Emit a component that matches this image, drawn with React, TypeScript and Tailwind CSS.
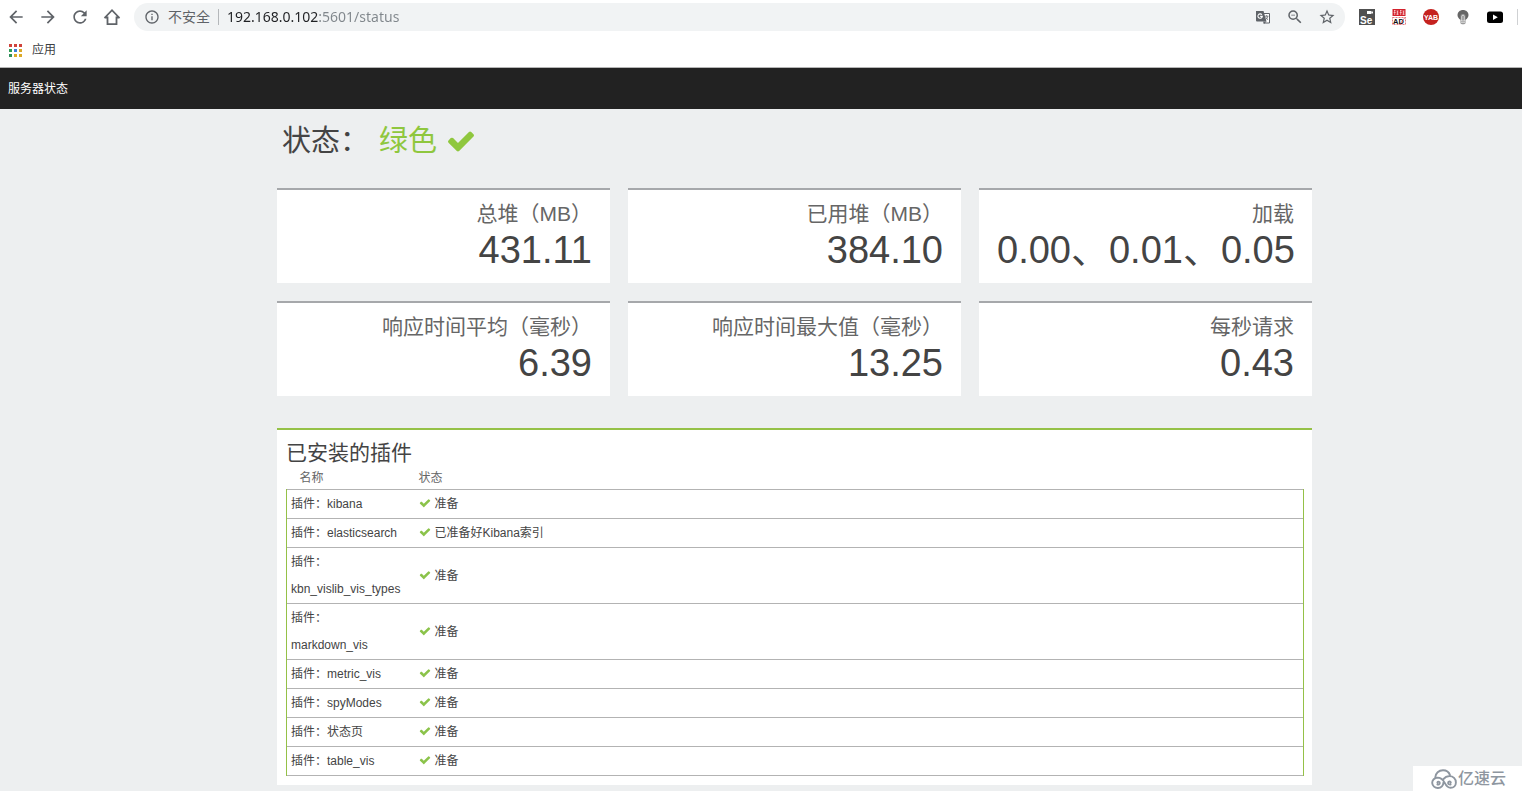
import type { ReactNode } from "react";
import {
  MdArrowBack,
  MdArrowForward,
  MdInfoOutline,
  MdRefresh,
  MdStarBorder,
  MdZoomOut,
} from "react-icons/md";

const metrics = [
  { label: "总堆（MB）", value: "431.11" },
  { label: "已用堆（MB）", value: "384.10" },
  { label: "加载", value: "0.00、0.01、0.05" },
  { label: "响应时间平均（毫秒）", value: "6.39" },
  { label: "响应时间最大值（毫秒）", value: "13.25" },
  { label: "每秒请求", value: "0.43" },
];

const plugins = [
  { name: "kibana", status: "准备" },
  { name: "elasticsearch", status: "已准备好Kibana索引" },
  { name: "kbn_vislib_vis_types", status: "准备" },
  { name: "markdown_vis", status: "准备" },
  { name: "metric_vis", status: "准备" },
  { name: "spyModes", status: "准备" },
  { name: "状态页", status: "准备" },
  { name: "table_vis", status: "准备" },
];

const appDots = [
  "bg-[#d0433c]",
  "bg-[#d0433c]",
  "bg-[#d0433c]",
  "bg-[#2f9e55]",
  "bg-[#3b7fd9]",
  "bg-[#dba928]",
  "bg-[#2f8f5b]",
  "bg-[#dba928]",
  "bg-[#dba928]",
];

function Check({ className }: { className: string }) {
  return (
    <svg viewBox="0 0 1792 1792" fill="currentColor" className={className} aria-hidden="true">
      <path d="M1671 566q0 40-28 68l-724 724-136 136q-28 28-68 28t-68-28l-136-136-362-362q-28-28-28-68t28-68l136-136q28-28 68-28t68 28l294 295 656-657q28-28 68-28t68 28l136 136q28 28 28 68z" />
    </svg>
  );
}

function IconButton({ label, children }: { label: string; children: ReactNode }) {
  return (
    <button
      type="button"
      aria-label={label}
      className="flex h-7 w-8 shrink-0 items-center justify-center text-[#5f6368]"
    >
      {children}
    </button>
  );
}

function HomeIcon() {
  return (
    <svg viewBox="0 0 18 18" className="size-[18px]" fill="none" stroke="currentColor" aria-hidden="true">
      <path d="M1.500 10L9 2.200l7.500 7.800M1.500 9.500h3V16.200h9V9.500h3" strokeWidth="1.800" strokeLinejoin="miter" />
    </svg>
  );
}

function TranslateIcon() {
  return (
    <svg viewBox="0 0 16 16" className="size-4" aria-hidden="true">
      <path d="M6.500 4.500h8v9.500h-6" fill="#fff" stroke="#5f6368" strokeWidth="1" />
      <path d="M1 2h7.500l3 10.500H2a1 1 0 0 1-1-1z" fill="#5f6368" />
      <path d="M8 12.500h3.500L9 15z" fill="#5f6368" />
      <path
        d="M6.900 5.800A2.200 2.200 0 1 0 7.300 7.400H5.200"
        fill="none"
        stroke="#fff"
        strokeWidth="1.100"
      />
      <path
        d="M9.800 7.200h3.600M11.600 6.200v1M12.800 7.300c-.3 1.400-1 2.400-2 3.200M10.800 8.400c.5 1 1.200 1.700 2.200 2.300"
        fill="none"
        stroke="#5f6368"
        strokeWidth=".8"
      />
    </svg>
  );
}

function SeleniumIcon() {
  return (
    <svg viewBox="0 0 16 16" className="size-4" aria-hidden="true">
      <rect width="16" height="16" fill="#505050" />
      <rect x="8" y="2" width="4.500" height="3" fill="#fff" />
      <path d="M12 3.500l2-1.300v2.600z" fill="#fff" />
      <text x="1" y="14.500" fontSize="10" fontWeight="700" fill="#fff">
        Se
      </text>
    </svg>
  );
}

function AdBlockIcon() {
  return (
    <svg viewBox="0 0 16 16" className="size-4" aria-hidden="true">
      <rect x="1.500" width="13" height="7" fill="#d3222d" />
      <path
        d="M3 1.500h1.500M2.700 3.500h2M3.700 1v5M5.500 2h2M5.500 4h2M5.500 5.500h2M6.500 2v3.500M9 1.500h1.500M8.700 3.500h2M9.700 1v5M11.500 2h2M11.500 4h2M11.500 5.500h2M12.500 2v3.500"
        stroke="#fbd5d7"
        strokeWidth=".7"
      />
      <rect
        x="1.500"
        y="8.500"
        width="13"
        height="7"
        fill="#fff"
        stroke="#d3222d"
        strokeWidth=".6"
        strokeDasharray="2 1"
      />
      <text x="2" y="14.500" fontSize="7.500" fontWeight="700" fill="#111">
        AD
      </text>
      <path d="M8.500 15.500l5.500-7" stroke="#d3222d" strokeWidth=".6" />
    </svg>
  );
}

function YabIcon() {
  return (
    <svg viewBox="0 0 16 16" className="size-4" aria-hidden="true">
      <circle cx="8" cy="8" r="8" fill="#c5221f" />
      <text x="8" y="10.500" fontSize="7" fontWeight="700" textAnchor="middle" fill="#fff">
        YAB
      </text>
    </svg>
  );
}

function BulbIcon() {
  return (
    <svg viewBox="0 0 16 16" className="size-4" aria-hidden="true">
      <path d="M8 1C4.800 1 2.500 3.200 2.500 6c0 2.300 1.300 3.800 3 4.700h5c1.700-.9 3-2.400 3-4.700 0-2.800-2.300-5-5.500-5z" fill="#666" />
      <path d="M5.500 7c0-2.600 5-2.600 5 0v7c0 1.800-5 1.800-5 0z" fill="#8c8c8c" />
      <path
        d="M6.800 12V7.200c0-1.400 2.400-1.400 2.400 0V12M6 12h4M6 13.700h4"
        fill="none"
        stroke="#f0f0f0"
        strokeWidth=".8"
      />
    </svg>
  );
}

function VideoIcon() {
  return (
    <svg viewBox="0 0 16 16" className="size-4" aria-hidden="true">
      <rect y="2.500" width="16" height="11.500" rx="2.500" fill="#000" />
      <path d="M6 5.500v5.500l4.800-2.750z" fill="#fff" />
    </svg>
  );
}

function CloudLogo() {
  return (
    <svg
      viewBox="0 0 26 20"
      className="h-5 w-[26px]"
      fill="none"
      stroke="currentColor"
      strokeWidth="1.900"
      strokeLinecap="round"
      aria-hidden="true"
    >
      <path d="M4.300 8.400C4.500 4.200 7.800 1.200 12 1.200c3.400 0 6 1.900 7 4.900" />
      <path d="M6.400 13.600c.1-1.400 2.400-1.300 2.400.4 0 1.300-1.200 1.700-2.400 1.500" />
      <path d="M12.400 13.600a5.600 5.200 0 1 1-5.800-5c3.400 0 5.400 2.200 7 5 1.400 2.800 3 5.200 6 5.200 3.100 0 5.300-2.200 5.300-5.400 0-3.700-2.800-6.300-6.400-6.300-2.500 0-4.600 1-6.100 3" />
      <path d="M19.600 15.500c-1.300.2-2.500-.3-2.500-1.600 0-1.800 2.500-1.900 2.700-.3" />
    </svg>
  );
}

function BrowserBar() {
  return (
    <header className="border-b border-[#b5b5b5] bg-white">
      <div className="flex h-[34px] items-center">
        <IconButton label="后退"><MdArrowBack className="size-5" /></IconButton>
        <IconButton label="前进"><MdArrowForward className="size-5" /></IconButton>
        <IconButton label="重新加载"><MdRefresh className="size-5" /></IconButton>
        <IconButton label="主页"><HomeIcon /></IconButton>
        <div className="ml-1.5 flex h-7 min-w-0 flex-1 items-center rounded-full bg-[#f1f3f4] pr-0.5 pl-2.5">
          <MdInfoOutline className="size-4 shrink-0 text-[#5f6368]" />
          <span className="ml-2 shrink-0 text-sm text-[#5f6368]">不安全</span>
          <span className="mx-2 h-4 w-px shrink-0 bg-[#b4b7ba]" />
          <input
            aria-label="地址"
            defaultValue="192.168.0.102:5601/status"
            className="min-w-0 flex-1 bg-[linear-gradient(90deg,#202124_92px,#80868b_92px)] bg-clip-text font-['Noto_Sans',sans-serif] text-sm text-transparent caret-black outline-none"
          />
          <IconButton label="翻译此页"><TranslateIcon /></IconButton>
          <IconButton label="缩放"><MdZoomOut className="size-[18px]" /></IconButton>
          <IconButton label="收藏"><MdStarBorder className="size-[18px]" /></IconButton>
        </div>
        <div className="ml-1.5 flex items-center">
          <IconButton label="Selenium"><SeleniumIcon /></IconButton>
          <IconButton label="广告拦截"><AdBlockIcon /></IconButton>
          <IconButton label="YAB"><YabIcon /></IconButton>
          <IconButton label="灯"><BulbIcon /></IconButton>
          <IconButton label="视频"><VideoIcon /></IconButton>
        </div>
        <span className="mr-1 ml-1.5 h-4 w-px bg-[#cfd1d3]" />
      </div>
      <div className="flex h-[33px] items-start px-[9px] pt-1.5">
        <button type="button" className="flex items-center gap-2.5 text-xs leading-5 text-[#3c4043]">
          <span className="grid grid-cols-3 gap-0.5">
            {appDots.map((dot, i) => (
              <span key={i} className={`size-[3px] ${dot}`} />
            ))}
          </span>
          应用
        </button>
      </div>
    </header>
  );
}

export default function App() {
  return (
    <div className="relative min-h-screen bg-[#edeff0] font-['Liberation_Sans','Noto_Sans_CJK_SC',sans-serif] text-[#444]">
      <BrowserBar />
      <nav className="flex h-[41px] items-center bg-[#222] px-2 text-xs text-white">服务器状态</nav>

      <main className="pr-[210px] pb-1.5 pl-[277px]">
        <h1 className="flex h-[79px] items-start pt-3 pl-[5px] text-[29px] leading-10">
          <span>状态：</span>
          <span className="ml-2.5 flex items-center gap-[9px] text-[#8fc73e]">
            绿色
            <Check className="size-[30px]" />
          </span>
        </h1>

        <section className="grid grid-cols-3 gap-[18px]">
          {metrics.map((metric) => (
            <div
              key={metric.label}
              className="border-t-2 border-[#a6a8ab] bg-white px-[18px] pt-[9px] pb-3 text-right whitespace-nowrap"
            >
              <h2 className="text-[21px] leading-[30px] text-[#666]">{metric.label}</h2>
              <p className="text-[38px] leading-[42px]">{metric.value}</p>
            </div>
          ))}
        </section>

        <section className="mt-8 border-t-2 border-[#95c147] bg-white pt-2 pr-2 pb-[9px] pl-[9px]">
          <h2 className="text-[21px] leading-[30px]">已安装的插件</h2>
          <table className="w-full table-fixed border-collapse text-xs">
            <thead>
              <tr className="leading-[21px] text-[#666]">
                <th className="w-[129px] pl-[13px] text-left font-normal">名称</th>
                <th className="pl-[3px] text-left font-normal">状态</th>
              </tr>
            </thead>
            <tbody>
              {plugins.map((plugin) => (
                <tr key={plugin.name} className="border-y border-y-[#b3b3b3] leading-[27px]">
                  <td className="border-l border-l-[#95c147] pt-px pr-3.5 pl-1">插件：{plugin.name}</td>
                  <td className="border-r border-r-[#95c147] pt-px pl-[3px]">
                    <Check className="mr-1 inline size-3 align-[-1px] text-[#8bc34a]" />
                    {plugin.status}
                  </td>
                </tr>
              ))}
            </tbody>
          </table>
        </section>
      </main>

      <div className="absolute right-0 bottom-0 flex h-[25px] items-center gap-px bg-white pr-4 pl-[18px] text-base font-medium text-[#8e96a0]">
        <CloudLogo />
        亿速云
      </div>
    </div>
  );
}
